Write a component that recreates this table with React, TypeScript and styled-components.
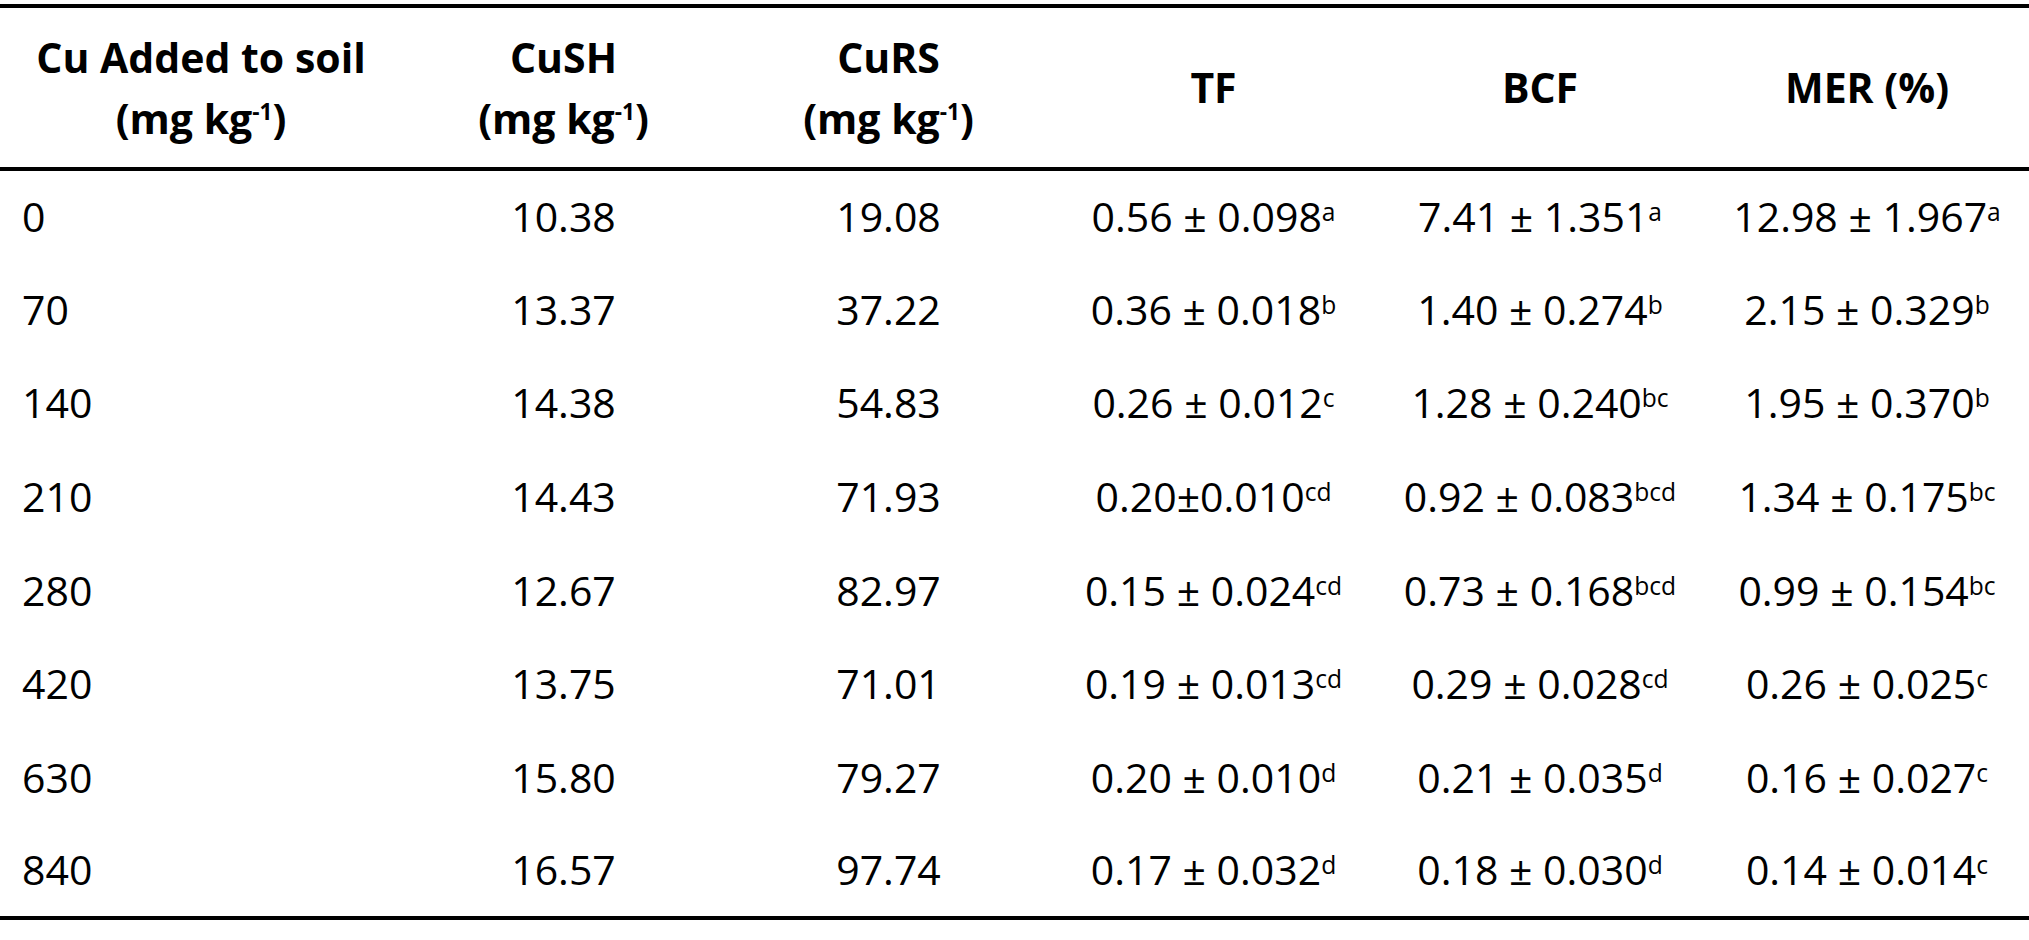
import React from 'react';
import styled, { createGlobalStyle } from 'styled-components';

const GlobalStyle = createGlobalStyle`
  html, body {
    margin: 0;
    padding: 0;
    background: #ffffff;
  }
  body {
    font-family: 'Open Sans', 'Noto Sans', 'DejaVu Sans', sans-serif;
    color: #000000;
  }
`;

const Page = styled.div`
  width: 2029px;
  padding-top: 4px;
`;

const Table = styled.table`
  width: 2029px;
  table-layout: fixed;
  border-collapse: collapse;
  border-top: 4px solid #000;
  border-bottom: 4px solid #000;
`;

const HeadRow = styled.tr`
  height: 163px;
  border-bottom: 4px solid #000;
`;

const HeadCell = styled.th`
  font-weight: 700;
  font-size: 41px;
  line-height: 61px;
  text-align: center;
  vertical-align: middle;
  padding: 0;
`;

const Row = styled.tr`
  height: 93.6px;
`;

const Cell = styled.td<{ $left?: boolean }>`
  font-size: 41px;
  line-height: 1;
  text-align: ${(p) => (p.$left ? 'left' : 'center')};
  padding: 0 0 0 ${(p) => (p.$left ? '22px' : '0')};
  vertical-align: middle;
  white-space: nowrap;
`;

const Sup = styled.sup`
  font-size: 0.6em;
  line-height: 0;
  vertical-align: 0.45em;
`;

const HeadSup = styled.sup`
  font-size: 0.55em;
  line-height: 0;
  vertical-align: 0.6em;
`;

type Stat = [string, string];

interface IRow {
  cu: string;
  cush: string;
  curs: string;
  tf: Stat;
  bcf: Stat;
  mer: Stat;
}

const rows: IRow[] = [
  { cu: '0', cush: '10.38', curs: '19.08', tf: ['0.56 ± 0.098', 'a'], bcf: ['7.41 ± 1.351', 'a'], mer: ['12.98 ± 1.967', 'a'] },
  { cu: '70', cush: '13.37', curs: '37.22', tf: ['0.36 ± 0.018', 'b'], bcf: ['1.40 ± 0.274', 'b'], mer: ['2.15 ± 0.329', 'b'] },
  { cu: '140', cush: '14.38', curs: '54.83', tf: ['0.26 ± 0.012', 'c'], bcf: ['1.28 ± 0.240', 'bc'], mer: ['1.95 ± 0.370', 'b'] },
  { cu: '210', cush: '14.43', curs: '71.93', tf: ['0.20±0.010', 'cd'], bcf: ['0.92 ± 0.083', 'bcd'], mer: ['1.34 ± 0.175', 'bc'] },
  { cu: '280', cush: '12.67', curs: '82.97', tf: ['0.15 ± 0.024', 'cd'], bcf: ['0.73 ± 0.168', 'bcd'], mer: ['0.99 ± 0.154', 'bc'] },
  { cu: '420', cush: '13.75', curs: '71.01', tf: ['0.19 ± 0.013', 'cd'], bcf: ['0.29 ± 0.028', 'cd'], mer: ['0.26 ± 0.025', 'c'] },
  { cu: '630', cush: '15.80', curs: '79.27', tf: ['0.20 ± 0.010', 'd'], bcf: ['0.21 ± 0.035', 'd'], mer: ['0.16 ± 0.027', 'c'] },
  { cu: '840', cush: '16.57', curs: '97.74', tf: ['0.17 ± 0.032', 'd'], bcf: ['0.18 ± 0.030', 'd'], mer: ['0.14 ± 0.014', 'c'] },
];

const StatCell: React.FunctionComponent<{ value: Stat }> = ({ value }) => (
  <Cell>
    {value[0]}
    <Sup>{value[1]}</Sup>
  </Cell>
);

const Unit = () => (
  <>
    (mg kg<HeadSup>-1</HeadSup>)
  </>
);

const App: React.FunctionComponent = () => (
  <Page>
    <GlobalStyle />
    <Table>
      <colgroup>
        <col style={{ width: 402 }} />
        <col style={{ width: 323 }} />
        <col style={{ width: 327 }} />
        <col style={{ width: 323 }} />
        <col style={{ width: 330 }} />
        <col style={{ width: 324 }} />
      </colgroup>
      <thead>
        <HeadRow>
          <HeadCell>
            Cu Added to soil
            <br />
            <Unit />
          </HeadCell>
          <HeadCell>
            CuSH
            <br />
            <Unit />
          </HeadCell>
          <HeadCell>
            CuRS
            <br />
            <Unit />
          </HeadCell>
          <HeadCell>TF</HeadCell>
          <HeadCell>BCF</HeadCell>
          <HeadCell>MER (%)</HeadCell>
        </HeadRow>
      </thead>
      <tbody>
        {rows.map((r) => (
          <Row key={r.cu}>
            <Cell $left>{r.cu}</Cell>
            <Cell>{r.cush}</Cell>
            <Cell>{r.curs}</Cell>
            <StatCell value={r.tf} />
            <StatCell value={r.bcf} />
            <StatCell value={r.mer} />
          </Row>
        ))}
      </tbody>
    </Table>
  </Page>
);

export default App;
